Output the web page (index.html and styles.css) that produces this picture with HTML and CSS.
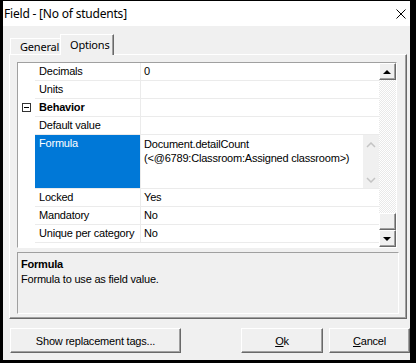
FILE: index.html
```
<!DOCTYPE html>
<html lang="en">
<head>
    <meta charset="UTF-8">
    <title>Field - [No of students]</title>
    <link rel="stylesheet" href="styles.css">
</head>
<body>
    <div class="window">
        <div class="titlebar">
            <span class="title">Field - [No of students]</span>
            <svg class="close" width="10" height="10" viewBox="0 0 10 10">
                <path d="M0.5 0.5 L9.5 9.5 M9.5 0.5 L0.5 9.5" stroke="#000" stroke-width="1" fill="none"/>
            </svg>
        </div>
        <div class="client">
            <div class="tabs">
                <div class="tab">General</div>
                <div class="tab active">Options</div>
            </div>
            <div class="page">
                <div class="grid">
                    <div class="rows">
                        <div class="row"><div class="gutter"></div><div class="name">Decimals</div><div class="value">0</div></div>
                        <div class="row"><div class="gutter"></div><div class="name">Units</div><div class="value"></div></div>
                        <div class="row">
                            <div class="gutter"><span class="minus"></span></div>
                            <div class="name bold">Behavior</div><div class="value"></div>
                        </div>
                        <div class="row"><div class="gutter"></div><div class="name">Default value</div><div class="value"></div></div>
                        <div class="row tall">
                            <div class="gutter"></div>
                            <div class="name selected">Formula</div>
                            <div class="value editor">
                                <div class="edit-text">Document.detailCount<br>(&lt;@6789:Classroom:Assigned classroom&gt;)</div>
                                <div class="edit-scroll">
                                    <svg width="10" height="6" viewBox="0 0 10 6"><polyline points="1,5 5,1 9,5" fill="none" stroke="#c4c4c4" stroke-width="1.5"/></svg>
                                    <svg width="10" height="6" viewBox="0 0 10 6"><polyline points="1,1 5,5 9,1" fill="none" stroke="#c4c4c4" stroke-width="1.5"/></svg>
                                </div>
                            </div>
                        </div>
                        <div class="row"><div class="gutter"></div><div class="name">Locked</div><div class="value">Yes</div></div>
                        <div class="row"><div class="gutter"></div><div class="name">Mandatory</div><div class="value">No</div></div>
                        <div class="row"><div class="gutter"></div><div class="name">Unique per category</div><div class="value">No</div></div>
                    </div>
                    <div class="vscroll">
                        <div class="sbtn"><span class="arrow-up"></span></div>
                        <div class="track"></div>
                        <div class="sbtn"></div>
                        <div class="sbtn"><span class="arrow-down"></span></div>
                    </div>
                </div>
                <div class="desc">
                    <div class="desc-title">Formula</div>
                    <div>Formula to use as field value.</div>
                </div>
            </div>
            <div class="buttons">
                <button class="btn wide">Show replacement tags...</button>
                <div class="spacer"></div>
                <button class="btn ok"><u>O</u>k</button>
                <button class="btn cancel"><u>C</u>ancel</button>
            </div>
        </div>
    </div>
</body>
</html>
```

FILE: styles.css
```
body {
    margin: 0;
    background-color: #000;
    font-family: "Liberation Sans", Arial, sans-serif;
    font-size: 11px;
    color: #000;
}
.window {
    width: 416px;
    height: 363px;
    box-sizing: border-box;
    border-style: solid;
    border-color: #000;
    border-width: 1px 6px 3px 3px;
    display: flex;
    flex-direction: column;
    background-color: #f0f0f0;
}
.titlebar {
    height: 25px;
    background-color: #fff;
    display: flex;
    align-items: center;
    padding-left: 1px;
    font-family: "Noto Sans", sans-serif;
    font-size: 12px;
}
.title {
    flex: 1;
    letter-spacing: -0.2px;
}
.close {
    margin-right: 4px;
}
.client {
    flex: 1;
    padding-top: 8px;
}

/* Tabs */
.tabs {
    display: flex;
    align-items: flex-end;
    height: 20px;
    padding-left: 7px;
    font-family: "Noto Sans", sans-serif;
    font-size: 11px;
    letter-spacing: -0.2px;
}
.tab {
    height: 16px;
    box-sizing: border-box;
    width: 50px;
    border-top: 1px solid #fff;
    border-left: 1px solid #fff;
    line-height: 16px;
    padding-left: 9px;
}
.tab.active {
    position: relative;
    z-index: 1;
    height: 21px;
    width: 54px;
    margin-bottom: -1px;
    background-color: #f0f0f0;
    border-right: 1px solid #696969;
    box-shadow: inset -1px 0 #a0a0a0;
    line-height: 20px;
    padding-left: 9px;
    padding-bottom: 1px;
}
.page {
    margin-left: 6px;
    width: 398px;
    height: 265px;
    box-sizing: border-box;
    border-style: solid;
    border-width: 1px;
    border-color: #fff #696969 #696969 #fff;
    box-shadow: inset -1px -1px #a0a0a0;
    padding: 7px 0 0 7px;
}

/* Property grid */
.grid {
    width: 380px;
    height: 186px;
    box-sizing: border-box;
    border-style: solid;
    border-width: 1px;
    border-color: #a0a0a0 #fff #fff #a0a0a0;
    background-color: #fff;
    display: flex;
    letter-spacing: -0.2px;
}
.rows {
    width: 361px;
    overflow: hidden;
}
.row {
    display: flex;
    height: 18px;
}
.row.tall {
    height: 54px;
}
.gutter {
    width: 17px;
    flex: none;
    position: relative;
}
.name, .value {
    box-sizing: border-box;
    border-bottom: 1px solid #ebebeb;
    line-height: 17px;
    white-space: nowrap;
}
.name {
    width: 106px;
    flex: none;
    padding-left: 4px;
    border-right: 1px solid #ebebeb;
}
.value {
    flex: 1;
    padding-left: 3px;
}
.bold {
    font-weight: bold;
}
.selected {
    background-color: #0078d7;
    color: #fff;
}
.minus {
    position: absolute;
    left: 4px;
    top: 4px;
    width: 9px;
    height: 9px;
    box-sizing: border-box;
    border: 1px solid #333;
}
.minus::after {
    content: "";
    position: absolute;
    left: 1px;
    top: 3px;
    width: 5px;
    height: 1px;
    background-color: #000;
}
.editor {
    display: flex;
    padding-left: 0;
}
.edit-text {
    flex: 1;
    padding: 2px 0 0 3px;
    line-height: 14px;
}
.edit-scroll {
    width: 16px;
    background-color: #f0f0f0;
    display: flex;
    flex-direction: column;
    justify-content: space-between;
    align-items: center;
    padding: 7px 0 5px;
}
.vscroll {
    width: 17px;
    display: flex;
    flex-direction: column;
}
.sbtn {
    height: 17px;
    box-sizing: border-box;
    background-color: #f0f0f0;
    border-style: solid;
    border-width: 1px;
    border-color: #fff #696969 #696969 #fff;
    box-shadow: inset -1px -1px #a0a0a0;
    display: flex;
    align-items: center;
    justify-content: center;
}
.track {
    flex: 1;
    background: repeating-conic-gradient(#fff 0 25%, #e9e9e9 0 50%) 0 0 / 2px 2px;
}
.arrow-up, .arrow-down {
    width: 0;
    height: 0;
    border-left: 4px solid transparent;
    border-right: 4px solid transparent;
    margin-right: 1px;
}
.arrow-up {
    border-bottom: 4px solid #000;
}
.arrow-down {
    border-top: 4px solid #000;
}

/* Description pane */
.desc {
    margin-top: 4px;
    width: 382px;
    height: 62px;
    box-sizing: border-box;
    border-style: solid;
    border-width: 1px;
    border-color: #a0a0a0 #fff #fff #a0a0a0;
    padding: 4px 0 0 3px;
    line-height: 15px;
    letter-spacing: -0.2px;
}
.desc-title {
    font-weight: bold;
}

/* Buttons */
.buttons {
    display: flex;
    margin-top: 9px;
    padding-left: 7px;
    height: 25px;
}
.spacer {
    flex: 1;
}
.btn {
    font-family: "Liberation Sans", Arial, sans-serif;
    font-size: 11px;
    letter-spacing: -0.2px;
    color: #000;
    background-color: #f0f0f0;
    height: 25px;
    box-sizing: border-box;
    border-style: solid;
    border-width: 1px;
    border-color: #fff #696969 #696969 #fff;
    box-shadow: inset -1px -1px #a0a0a0;
    padding: 0;
}
.btn.wide {
    width: 171px;
}
.btn.ok {
    width: 82px;
    margin-right: 6px;
}
.btn.cancel {
    width: 81px;
}
```
